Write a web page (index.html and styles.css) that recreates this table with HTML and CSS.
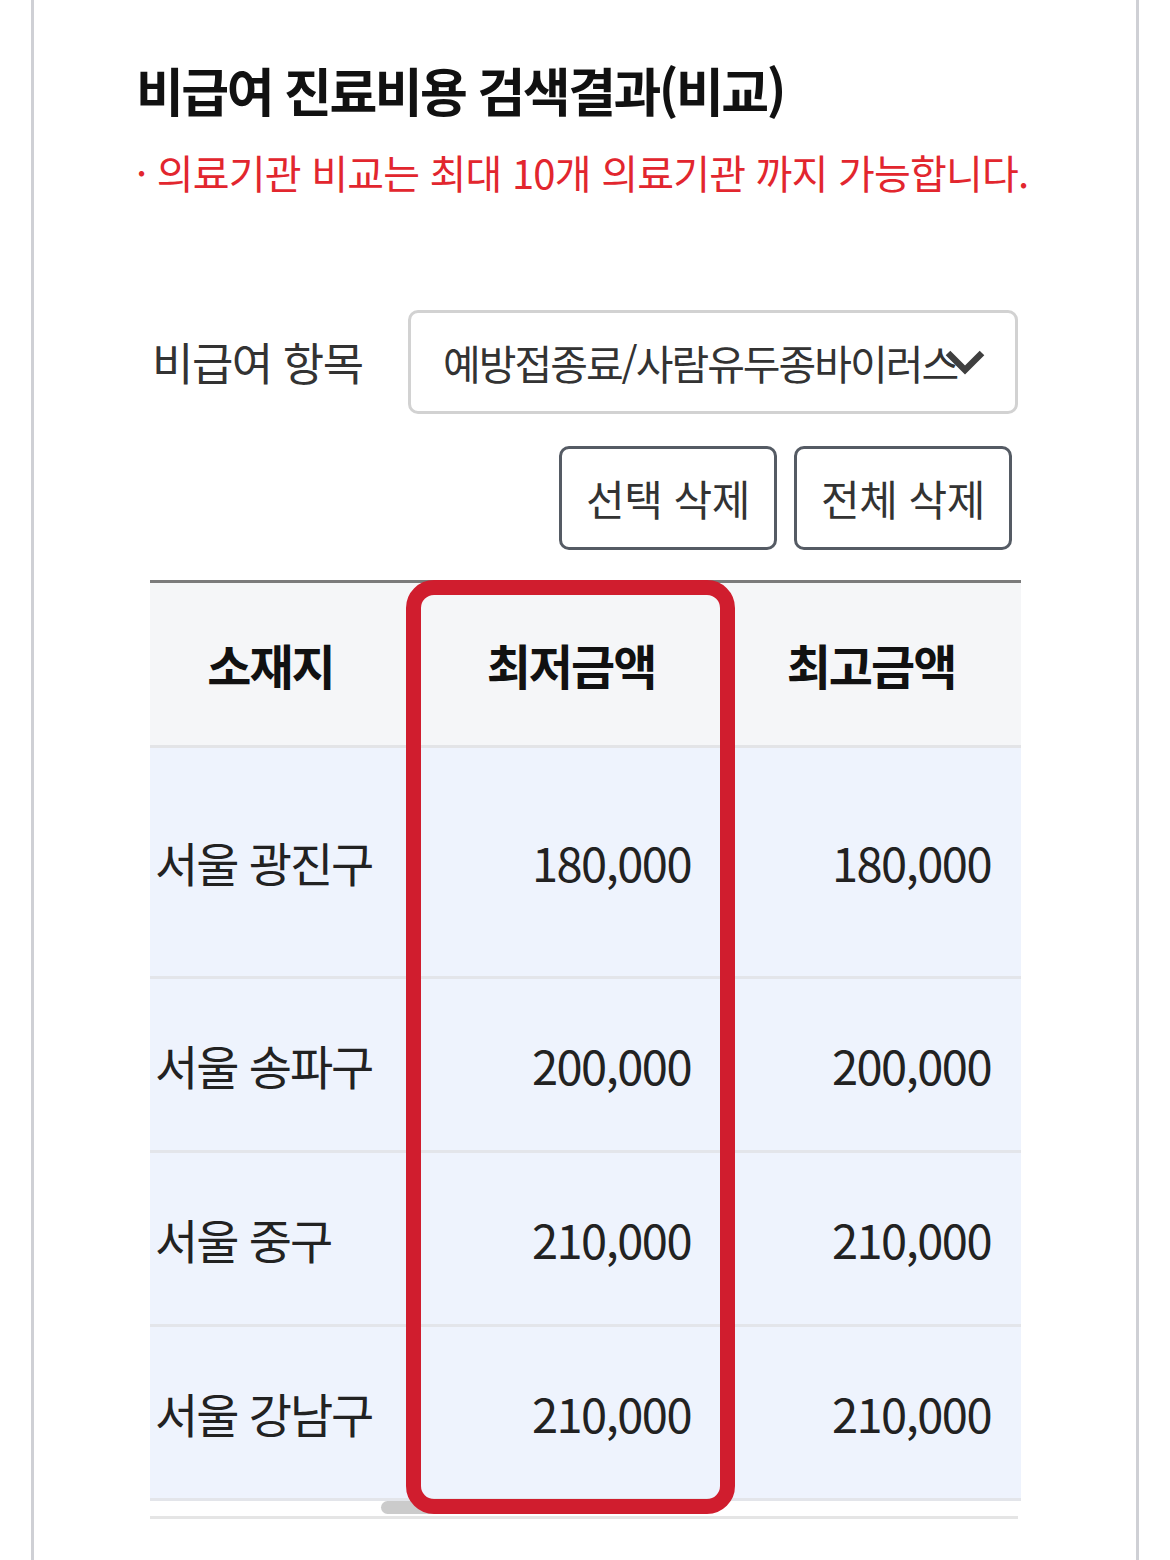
FILE: index.html
```html
<!DOCTYPE html>
<html lang="ko">
<head>
    <meta charset="UTF-8">
    <meta name="viewport" content="width=device-width, initial-scale=1.0">
    <title>비급여 진료비용 검색결과(비교)</title>
    <link rel="stylesheet" href="styles.css">
</head>
<body>

    <div class="page">
        <div class="result-head">
            <h2 class="result-title">비급여 진료비용 검색결과(비교)</h2>
            <p class="result-notice">· 의료기관 비교는 최대 10개 의료기관 까지 가능합니다.</p>
        </div>

        <div class="item-row">
            <span class="item-label">비급여 항목</span>
            <div class="item-select">
                <span class="item-select-text">예방접종료/사람유두종바이러스</span>
                <svg class="item-select-arrow" width="40" height="26" viewBox="0 0 40 26">
                    <polyline points="3,4 20,21 37,4" fill="none" stroke="#3f3f3f" stroke-width="6.5" stroke-linejoin="miter"/>
                </svg>
            </div>
        </div>

        <div class="btn-row">
            <button class="btn-line">선택 삭제</button>
            <button class="btn-line">전체 삭제</button>
        </div>

        <div class="compare-wrap">
            <table class="compare-table">
                <colgroup>
                    <col class="col-loc">
                    <col class="col-price">
                    <col class="col-price">
                </colgroup>
                <thead>
                    <tr>
                        <th>소재지</th>
                        <th>최저금액</th>
                        <th>최고금액</th>
                    </tr>
                </thead>
                <tbody>
                    <tr class="row-tall">
                        <td>서울 광진구</td>
                        <td class="num">180,000</td>
                        <td class="num">180,000</td>
                    </tr>
                    <tr>
                        <td>서울 송파구</td>
                        <td class="num">200,000</td>
                        <td class="num">200,000</td>
                    </tr>
                    <tr>
                        <td>서울 중구</td>
                        <td class="num">210,000</td>
                        <td class="num">210,000</td>
                    </tr>
                    <tr>
                        <td>서울 강남구</td>
                        <td class="num">210,000</td>
                        <td class="num">210,000</td>
                    </tr>
                </tbody>
            </table>
            <div class="scroll-track">
                <div class="scroll-thumb"></div>
            </div>
            <!-- highlight over the lowest price column -->
            <div class="highlight-box"></div>
        </div>
    </div>

</body>
</html>
```

FILE: styles.css
```css
body {
    margin: 0;
    background: #fff;
    font-family: "Noto Sans CJK KR", "Noto Sans", sans-serif;
    color: #222;
}

.page {
    margin: 0 31px;
    min-height: 1560px;
    border-left: 3px solid #cfd0d5;
    border-right: 3px solid #cfd0d5;
    padding: 0 118px 0 116px;
    box-sizing: border-box;
}

.result-head {
    margin: 0 -60px 0 -14px;
    padding-top: 56px;
}

.result-title {
    margin: 0;
    font-size: 52px;
    font-weight: 700;
    letter-spacing: -2.5px;
    line-height: 1.3;
    color: #111;
}

.result-notice {
    margin: 22px 0 0 0;
    font-size: 40px;
    letter-spacing: -0.8px;
    line-height: 1.3;
    color: #e2262e;
    white-space: nowrap;
}

.item-row {
    display: flex;
    align-items: center;
    margin-top: 112px;
}

.item-label {
    flex: none;
    width: 256px;
    padding-left: 2px;
    font-size: 45px;
    letter-spacing: -1.5px;
    color: #333;
}

.item-select {
    flex: 1;
    display: flex;
    align-items: center;
    height: 104px;
    padding: 0 30px 0 32px;
    border: 3px solid #d2d2d2;
    border-radius: 10px;
    box-sizing: border-box;
    overflow: hidden;
}

.item-select-text {
    flex: 1;
    overflow: hidden;
    white-space: nowrap;
    font-size: 41px;
    letter-spacing: -2px;
    color: #333;
}

.item-select-arrow {
    flex: none;
    margin-left: -18px;
}

.btn-row {
    display: flex;
    justify-content: flex-end;
    gap: 17px;
    margin-top: 32px;
    padding-right: 6px;
}

.btn-line {
    width: 218px;
    height: 104px;
    background: #fff;
    border: 3px solid #555b64;
    border-radius: 10px;
    font-family: inherit;
    font-size: 42px;
    letter-spacing: -0.5px;
    color: #333;
    padding: 0;
}

.compare-wrap {
    position: relative;
    margin-top: 30px;
}

.compare-table {
    width: 100%;
    border-collapse: collapse;
    table-layout: fixed;
    border-top: 3px solid #7b7b7b;
}

.col-loc {
    width: 271px;
}

.col-price {
    width: 300px;
}

.compare-table th {
    height: 162px;
    background: #f5f6f8;
    border-bottom: 3px solid #e3e4e7;
    font-size: 48px;
    font-weight: 700;
    letter-spacing: -2px;
    color: #111;
    padding: 0;
}

.compare-table th:first-child {
    padding-right: 30px;
}

.compare-table td {
    height: 171px;
    background: #eef3fd;
    border-bottom: 3px solid #e3e5ea;
    font-size: 47px;
    letter-spacing: -2px;
    color: #222;
    padding: 0 0 0 5px;
    white-space: nowrap;
}

.compare-table .row-tall td {
    height: 228px;
}

.compare-table td.num {
    text-align: right;
    padding: 0 30px 0 0;
    letter-spacing: -1.5px;
}

.scroll-track {
    height: 15px;
    border-bottom: 3px solid #e5e5e5;
}

.scroll-thumb {
    width: 278px;
    height: 13px;
    margin-left: 231px;
    background: #cbcbcb;
    border-radius: 7px;
}

.highlight-box {
    position: absolute;
    left: 256px;
    top: 0;
    width: 329px;
    height: 934px;
    border: 15px solid #d01d2e;
    border-radius: 28px;
    box-sizing: border-box;
}
```
